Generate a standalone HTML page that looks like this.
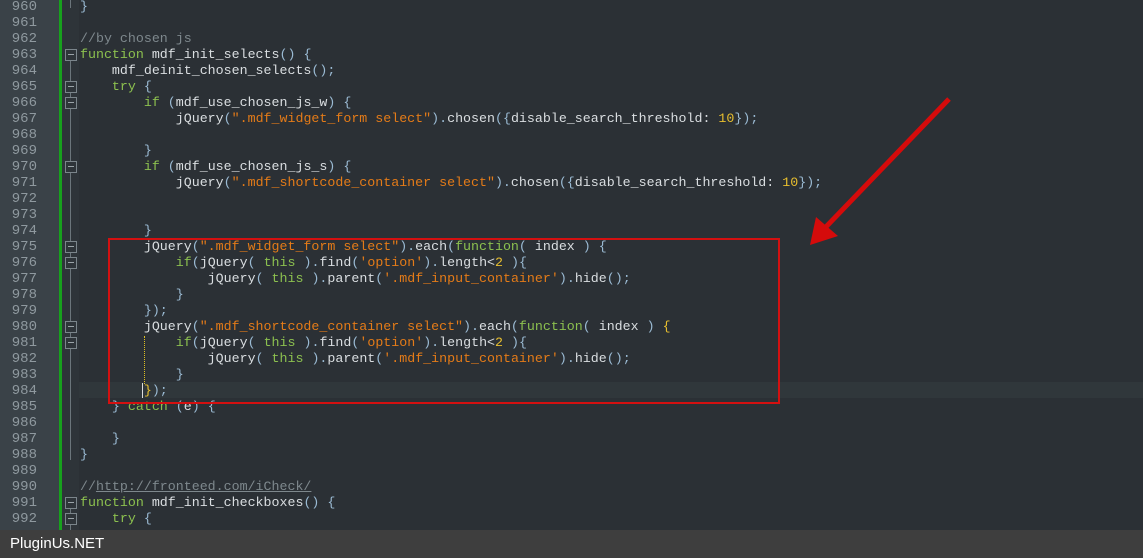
<!DOCTYPE html>
<html><head><meta charset="utf-8"><style>
body{margin:0;width:1143px;height:558px;overflow:hidden;background:#2b3035;position:relative;font-family:"Liberation Mono",monospace}
#g{position:absolute;left:0;top:0;width:59px;height:530px;background:#3a4248}
#gb{position:absolute;left:59px;top:0;width:3px;height:530px;background:#17a11d}
#fc{position:absolute;left:62px;top:0;width:17px;height:530px;background:#2e3439}
.n{position:absolute;left:0;width:37px;text-align:right;color:#8f999f;font-size:14px;line-height:16px}
.l{position:absolute;left:80px;white-space:pre;color:#dadee1;font-size:13.3px;line-height:16px}
.k{color:#8cc04f}.s{color:#e47b18}.m{color:#e8bf2e}.p{color:#9bbbd4}.c{color:#7e888d}.u{color:#7e888d;text-decoration:underline}
.fb{position:absolute;left:65px;width:10px;height:10px;border:1px solid #7b858b;background:#2e3439;z-index:2}
.fb:after{content:"";position:absolute;left:2px;top:4px;width:6px;height:1px;background:#9aa3a8}
.vl{position:absolute;left:70px;width:1px;background:#6b757b}
.hl{position:absolute;left:0;top:382px;width:1143px;height:16px;background:#30373b}
#bar{position:absolute;left:0;top:530px;width:1143px;height:28px;background:#3e3e3e;color:#fff;font-family:"Liberation Sans",sans-serif;font-size:15px;line-height:28px;padding-left:10px;box-sizing:border-box}
</style></head><body>
<div class="hl"></div>
<div id="g"></div><div id="gb"></div><div id="fc"></div>
<div class="vl" style="top:0;height:8px"></div>
<div class="vl" style="top:60px;height:400px"></div>
<div class="vl" style="top:500px;height:30px"></div>
<div class="fb" style="top:49px"></div><div class="fb" style="top:81px"></div><div class="fb" style="top:97px"></div><div class="fb" style="top:161px"></div><div class="fb" style="top:241px"></div><div class="fb" style="top:257px"></div><div class="fb" style="top:321px"></div><div class="fb" style="top:337px"></div><div class="fb" style="top:497px"></div><div class="fb" style="top:513px"></div>
<div class="n" style="top:-1px">960</div><div class="n" style="top:15px">961</div><div class="n" style="top:31px">962</div><div class="n" style="top:47px">963</div><div class="n" style="top:63px">964</div><div class="n" style="top:79px">965</div><div class="n" style="top:95px">966</div><div class="n" style="top:111px">967</div><div class="n" style="top:127px">968</div><div class="n" style="top:143px">969</div><div class="n" style="top:159px">970</div><div class="n" style="top:175px">971</div><div class="n" style="top:191px">972</div><div class="n" style="top:207px">973</div><div class="n" style="top:223px">974</div><div class="n" style="top:239px">975</div><div class="n" style="top:255px">976</div><div class="n" style="top:271px">977</div><div class="n" style="top:287px">978</div><div class="n" style="top:303px">979</div><div class="n" style="top:319px">980</div><div class="n" style="top:335px">981</div><div class="n" style="top:351px">982</div><div class="n" style="top:367px">983</div><div class="n" style="top:383px">984</div><div class="n" style="top:399px">985</div><div class="n" style="top:415px">986</div><div class="n" style="top:431px">987</div><div class="n" style="top:447px">988</div><div class="n" style="top:463px">989</div><div class="n" style="top:479px">990</div><div class="n" style="top:495px">991</div><div class="n" style="top:511px">992</div>
<div class="l" style="top:-1px"><span class="p">}</span></div>
<div class="l" style="top:31px"><span class="c">//by chosen js</span></div>
<div class="l" style="top:47px"><span class="k">function</span> mdf_init_selects<span class="p">() {</span></div>
<div class="l" style="top:63px">    mdf_deinit_chosen_selects<span class="p">();</span></div>
<div class="l" style="top:79px">    <span class="k">try</span> <span class="p">{</span></div>
<div class="l" style="top:95px">        <span class="k">if</span> <span class="p">(</span>mdf_use_chosen_js_w<span class="p">) {</span></div>
<div class="l" style="top:111px">            jQuery<span class="p">(</span><span class="s">".mdf_widget_form select"</span><span class="p">).</span>chosen<span class="p">({</span>disable_search_threshold: <span class="m">10</span><span class="p">});</span></div>
<div class="l" style="top:143px">        <span class="p">}</span></div>
<div class="l" style="top:159px">        <span class="k">if</span> <span class="p">(</span>mdf_use_chosen_js_s<span class="p">) {</span></div>
<div class="l" style="top:175px">            jQuery<span class="p">(</span><span class="s">".mdf_shortcode_container select"</span><span class="p">).</span>chosen<span class="p">({</span>disable_search_threshold: <span class="m">10</span><span class="p">});</span></div>
<div class="l" style="top:223px">        <span class="p">}</span></div>
<div class="l" style="top:239px">        jQuery<span class="p">(</span><span class="s">".mdf_widget_form select"</span><span class="p">).</span>each<span class="p">(</span><span class="k">function</span><span class="p">(</span> index <span class="p">) {</span></div>
<div class="l" style="top:255px">            <span class="k">if</span><span class="p">(</span>jQuery<span class="p">(</span> <span class="k">this</span> <span class="p">).</span>find<span class="p">(</span><span class="s">'option'</span><span class="p">).</span>length&lt;<span class="m">2</span> <span class="p">){</span></div>
<div class="l" style="top:271px">                jQuery<span class="p">(</span> <span class="k">this</span> <span class="p">).</span>parent<span class="p">(</span><span class="s">'.mdf_input_container'</span><span class="p">).</span>hide<span class="p">();</span></div>
<div class="l" style="top:287px">            <span class="p">}</span></div>
<div class="l" style="top:303px">        <span class="p">});</span></div>
<div class="l" style="top:319px">        jQuery<span class="p">(</span><span class="s">".mdf_shortcode_container select"</span><span class="p">).</span>each<span class="p">(</span><span class="k">function</span><span class="p">(</span> index <span class="p">)</span> <span class="m">{</span></div>
<div class="l" style="top:335px">            <span class="k">if</span><span class="p">(</span>jQuery<span class="p">(</span> <span class="k">this</span> <span class="p">).</span>find<span class="p">(</span><span class="s">'option'</span><span class="p">).</span>length&lt;<span class="m">2</span> <span class="p">){</span></div>
<div class="l" style="top:351px">                jQuery<span class="p">(</span> <span class="k">this</span> <span class="p">).</span>parent<span class="p">(</span><span class="s">'.mdf_input_container'</span><span class="p">).</span>hide<span class="p">();</span></div>
<div class="l" style="top:367px">            <span class="p">}</span></div>
<div class="l" style="top:383px">        <span class="m">}</span><span class="p">);</span></div>
<div class="l" style="top:399px">    <span class="p">}</span> <span class="k">catch</span> <span class="p">(</span>e<span class="p">) {</span></div>
<div class="l" style="top:431px">    <span class="p">}</span></div>
<div class="l" style="top:447px"><span class="p">}</span></div>
<div class="l" style="top:479px"><span class="c">//</span><span class="u">http://fronteed.com/iCheck/</span></div>
<div class="l" style="top:495px"><span class="k">function</span> mdf_init_checkboxes<span class="p">() {</span></div>
<div class="l" style="top:511px">    <span class="k">try</span> <span class="p">{</span></div>
<div style="position:absolute;left:144px;top:336px;width:1px;height:48px;border-left:1px dotted #e0c020"></div>
<div style="position:absolute;left:142px;top:383px;width:1px;height:15px;background:#ddd"></div>
<div style="position:absolute;left:108px;top:238px;width:668px;height:162px;border:2px solid #d41010"></div>
<svg style="position:absolute;left:0;top:0" width="1143" height="530"><line x1="949" y1="99" x2="822" y2="231" stroke="#d50b0b" stroke-width="5"/><polygon points="810,245 816,217 838,236" fill="#d50b0b"/></svg>
<div id="bar">PluginUs.NET</div>
</body></html>
